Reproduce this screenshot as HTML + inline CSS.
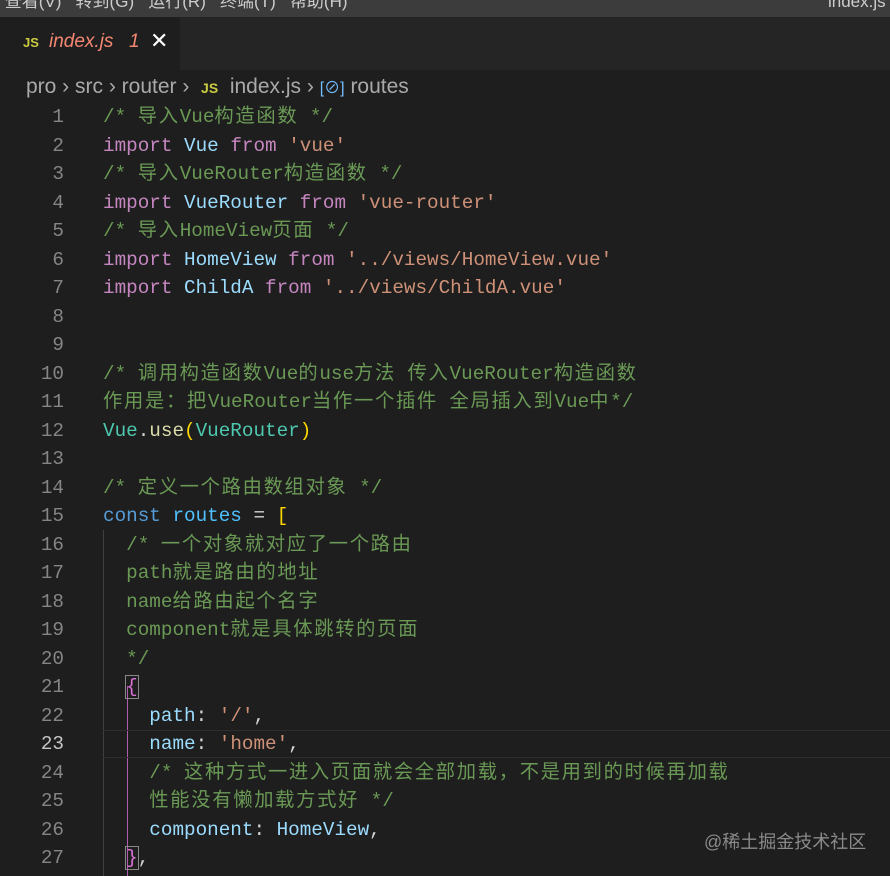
<!DOCTYPE html>
<html><head><meta charset="utf-8"><style>
body{margin:0;width:890px;height:876px;background:#1e1e1e;overflow:hidden;position:relative;font-family:"Liberation Sans","Noto Sans CJK SC",sans-serif}
#menu{position:absolute;left:0;top:0;width:890px;height:17px;background:#3c3c3c;color:#ccc;font-size:17px;line-height:4px;overflow:hidden;white-space:nowrap}
#tabs{position:absolute;left:0;top:17px;width:890px;height:53px;background:#252526}
#tab{position:absolute;left:0;top:0;width:180px;height:53px;background:#1e1e1e}
.js{color:#cbcb41;font-weight:bold;font-size:13px;font-family:"Liberation Sans",sans-serif}
#crumb{position:absolute;left:26px;top:74px;color:#a9a9a9;font-size:21px;white-space:nowrap}
#code{position:absolute;left:0;top:103px;font-family:"Liberation Mono","Noto Sans CJK SC",monospace;font-size:19.3px}
.l{height:28.5px;line-height:28.5px;position:relative;white-space:pre;overflow:hidden}
.n{display:inline-block;width:64px;text-align:right;color:#858585;margin-right:39px}
.k{letter-spacing:1.7px}
.c{color:#6a9955}.kw{color:#c586c0}.b{color:#569cd6}.v{color:#9cdcfe}.s{color:#ce9178}.t{color:#4ec9b0}.f{color:#dcdcaa}.y{color:#ffd700}.m{color:#da70d6}.r{color:#4fc1ff}.w{color:#d4d4d4}
</style></head><body>
<div id="menu">&nbsp;查看(V)&nbsp;&nbsp;&nbsp;转到(G)&nbsp;&nbsp;&nbsp;运行(R)&nbsp;&nbsp;&nbsp;终端(T)&nbsp;&nbsp;&nbsp;帮助(H)<span style="position:absolute;left:828px">index.js</span></div>
<div id="tabs"><div id="tab">
<span class="js" style="position:absolute;left:23px;top:18px">JS</span>
<span style="position:absolute;left:49px;top:14px;color:#f48771;font-style:italic;font-size:19px">index.js</span>
<span style="position:absolute;left:129px;top:14px;color:#f48771;font-style:italic;font-size:19px">1</span>
<span style="position:absolute;left:150px;top:11px;color:#fff;font-size:22px">✕</span>
</div></div>
<div id="crumb">pro › src › router › &nbsp;<span class="js" style="font-size:14px">JS</span>&nbsp; index.js › <span style="color:#75beff;font-size:16px">[⊘]</span> routes</div>
<div style="position:absolute;left:103px;top:530px;width:1px;height:346px;background:#404040"></div>
<div style="position:absolute;left:127px;top:686px;width:1px;height:190px;background:#b05db0"></div>
<div style="position:absolute;left:103px;top:730px;width:787px;height:26px;border-top:1px solid #2e2e2e;border-bottom:1px solid #2e2e2e"></div>
<div id="code"><div class="l"><span class="n">1</span><span class="c">/* <span class="k">导入</span>Vue<span class="k">构造函数</span> */</span></div><div class="l"><span class="n">2</span><span class="kw">import</span> <span class="v">Vue</span> <span class="kw">from</span> <span class="s">'vue'</span></div><div class="l"><span class="n">3</span><span class="c">/* <span class="k">导入</span>VueRouter<span class="k">构造函数</span> */</span></div><div class="l"><span class="n">4</span><span class="kw">import</span> <span class="v">VueRouter</span> <span class="kw">from</span> <span class="s">'vue-router'</span></div><div class="l"><span class="n">5</span><span class="c">/* <span class="k">导入</span>HomeView<span class="k">页面</span> */</span></div><div class="l"><span class="n">6</span><span class="kw">import</span> <span class="v">HomeView</span> <span class="kw">from</span> <span class="s">'../views/HomeView.vue'</span></div><div class="l"><span class="n">7</span><span class="kw">import</span> <span class="v">ChildA</span> <span class="kw">from</span> <span class="s">'../views/ChildA.vue'</span></div><div class="l"><span class="n">8</span></div><div class="l"><span class="n">9</span></div><div class="l"><span class="n">10</span><span class="c">/* <span class="k">调用构造函数</span>Vue<span class="k">的</span>use<span class="k">方法</span> <span class="k">传入</span>VueRouter<span class="k">构造函数</span></span></div><div class="l"><span class="n">11</span><span class="c"><span class="k">作用是：把</span>VueRouter<span class="k">当作一个插件</span> <span class="k">全局插入到</span>Vue<span class="k">中</span>*/</span></div><div class="l"><span class="n">12</span><span class="t">Vue</span><span class="w">.</span><span class="f">use</span><span class="y">(</span><span class="t">VueRouter</span><span class="y">)</span></div><div class="l"><span class="n">13</span></div><div class="l"><span class="n">14</span><span class="c">/* <span class="k">定义一个路由数组对象</span> */</span></div><div class="l"><span class="n">15</span><span class="b">const</span> <span class="r">routes</span> <span class="w">=</span> <span class="y">[</span></div><div class="l"><span class="n">16</span>  <span class="c">/* <span class="k">一个对象就对应了一个路由</span></span></div><div class="l"><span class="n">17</span>  <span class="c">path<span class="k">就是路由的地址</span></span></div><div class="l"><span class="n">18</span>  <span class="c">name<span class="k">给路由起个名字</span></span></div><div class="l"><span class="n">19</span>  <span class="c">component<span class="k">就是具体跳转的页面</span></span></div><div class="l"><span class="n">20</span>  <span class="c">*/</span></div><div class="l"><span class="n">21</span>  <span class="m" style="outline:1px solid #888">{</span></div><div class="l"><span class="n">22</span>    <span class="v">path</span><span class="w">:</span> <span class="s">'/'</span><span class="w">,</span></div><div class="l"><span class="n" style="color:#c6c6c6">23</span>    <span class="v">name</span><span class="w">:</span> <span class="s">'home'</span><span class="w">,</span></div><div class="l"><span class="n">24</span>    <span class="c">/* <span class="k">这种方式一进入页面就会全部加载，不是用到的时候再加载</span></span></div><div class="l"><span class="n">25</span>    <span class="c"><span class="k">性能没有懒加载方式好</span> */</span></div><div class="l"><span class="n">26</span>    <span class="v">component</span><span class="w">:</span> <span class="v">HomeView</span><span class="w">,</span></div><div class="l"><span class="n">27</span>  <span class="m" style="outline:1px solid #888">}</span><span class="w">,</span></div></div>
<div style="position:absolute;left:704px;top:828px;color:#8a8a8a;font-size:18px">@稀土掘金技术社区</div>
</body></html>
